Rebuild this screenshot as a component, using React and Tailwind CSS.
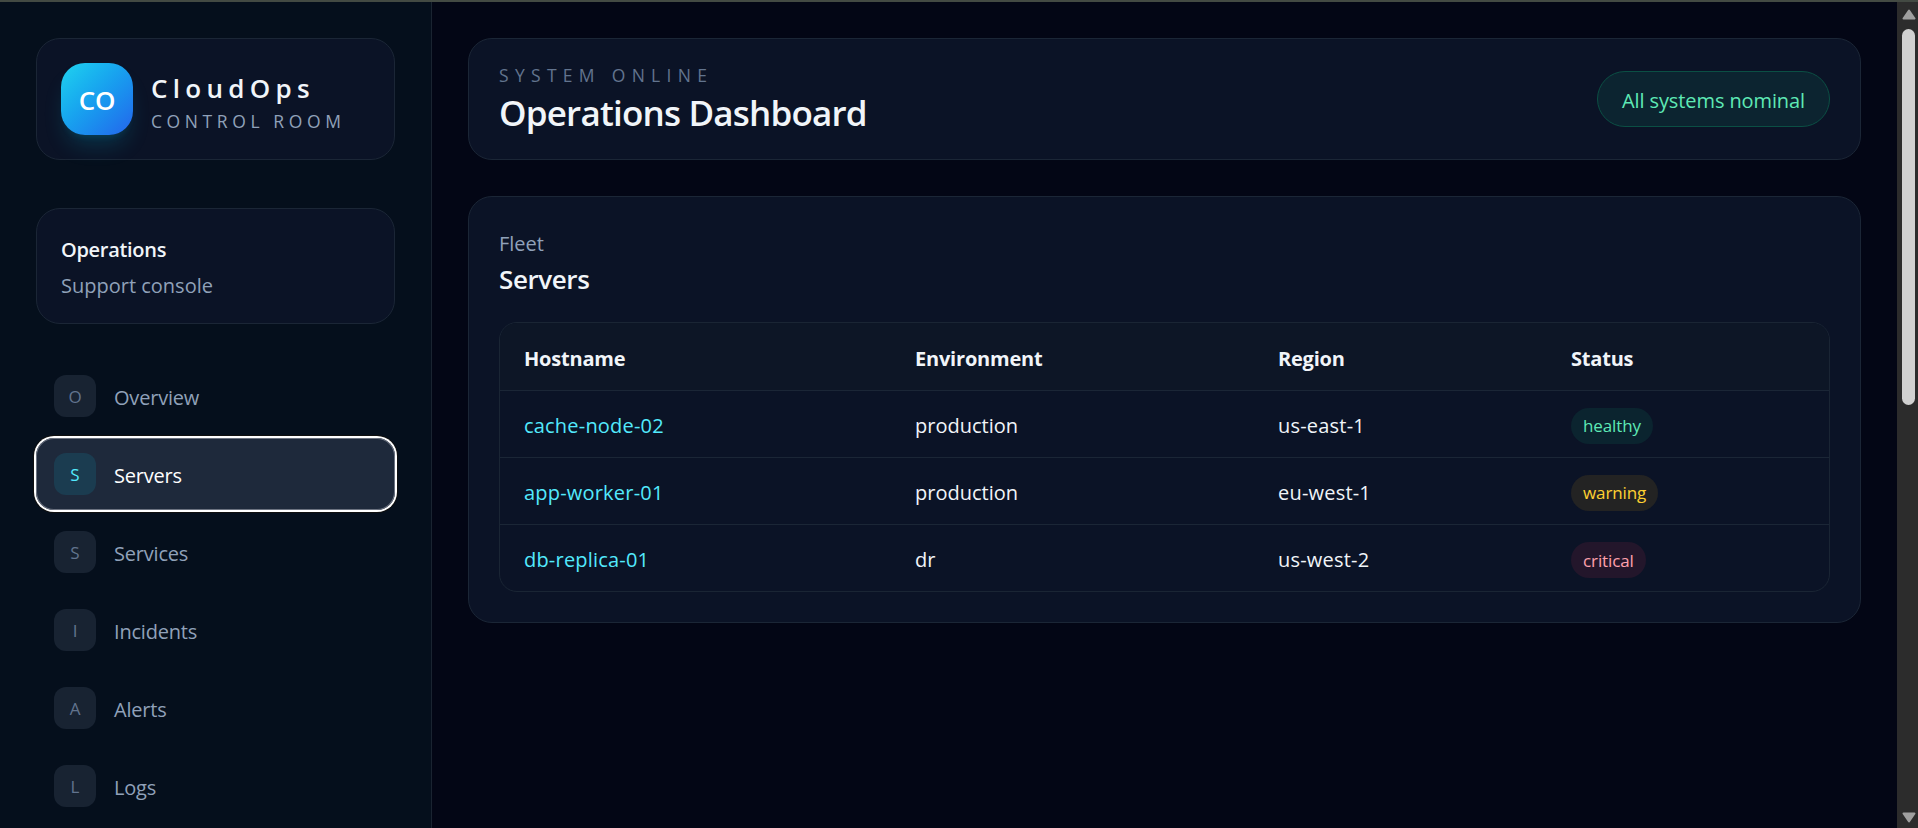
import clsx from 'clsx';

const navItems = ['Overview', 'Servers', 'Services', 'Incidents', 'Alerts', 'Logs'];

const servers = [
  { hostname: 'cache-node-02', environment: 'production', region: 'us-east-1', status: 'healthy' },
  { hostname: 'app-worker-01', environment: 'production', region: 'eu-west-1', status: 'warning' },
  { hostname: 'db-replica-01', environment: 'dr', region: 'us-west-2', status: 'critical' }
];

const statusStyles = {
  healthy: 'bg-[#0b242f] text-emerald-300',
  warning: 'bg-[#232323] text-amber-300',
  critical: 'bg-[#23162b] text-rose-300'
};

function Sidebar({ active }) {
  return (
    <aside className="w-[432px] shrink-0 border-r border-[#1a2431] bg-[#050f1c] px-9 pt-9">
      <div className="flex h-[122px] items-center gap-[18px] rounded-3xl border border-[#1b2636] bg-[#0b1326] px-6">
        <div className="flex size-[72px] shrink-0 items-center justify-center rounded-3xl bg-linear-to-br from-[#22d3ee] to-[#2563eb] pt-0.5 text-[26px] font-semibold tracking-[-0.3px] text-white shadow-[0_15px_22px_-5px_rgba(6,182,212,0.2),0_6px_9px_-6px_rgba(6,182,212,0.2)]">
          CO
        </div>
        <div className="pt-[7px]">
          <p className="text-[26px] leading-9 font-semibold tracking-[5.3px] text-slate-100">CloudOps</p>
          <p className="text-[17.5px] leading-[30px] tracking-[4.6px] text-slate-400">CONTROL ROOM</p>
        </div>
      </div>

      <div className="mt-12 flex h-[116px] flex-col justify-center rounded-3xl border border-[#1b2636] bg-[#0b1326] px-6 pt-[3px] text-[20px] leading-9">
        <p className="font-semibold tracking-[-0.3px] text-slate-100">Operations</p>
        <p className="text-slate-400">Support console</p>
      </div>

      <nav className="mt-9 flex flex-col gap-1.5">
        {navItems.map(item => (
          <a
            key={item}
            href="#"
            className={clsx(
              'flex h-[72px] items-center gap-[18px] rounded-[18px] px-[18px] text-[20px]',
              item === active
                ? 'bg-[#1e293b] text-white shadow-[0_0_0_2px_#ffffff,0_0_0_3px_#101010,inset_0_0_0_1px_#6b7280]'
                : 'text-slate-400'
            )}
          >
            <span
              className={clsx(
                'flex size-[42px] items-center justify-center rounded-xl pt-px text-[17px]',
                item === active ? 'bg-[#1b3c50] text-cyan-300' : 'bg-[#182332] text-slate-500'
              )}
            >
              {item[0]}
            </span>
            <span className="pt-[3px] tracking-[-0.2px]">{item}</span>
          </a>
        ))}
      </nav>
    </aside>
  );
}

function ServersTable() {
  return (
    <div className="mt-[25px] overflow-hidden rounded-[18px] border border-[#1a2534]">
      <table className="w-full table-fixed text-left text-[20px] text-slate-100">
        <colgroup>
          <col className="w-[391px]" />
          <col className="w-[363px]" />
          <col className="w-[293px]" />
          <col />
        </colgroup>
        <thead>
          <tr className="h-[67px] border-b border-[#1b2636] bg-[#0d1626] tracking-[-0.2px]">
            <th className="px-6 pt-[5px] font-bold">Hostname</th>
            <th className="px-6 pt-[5px] font-bold">Environment</th>
            <th className="px-6 pt-[5px] font-bold">Region</th>
            <th className="px-6 pt-[5px] font-bold">Status</th>
          </tr>
        </thead>
        <tbody>
          {servers.map(server => (
            <tr key={server.hostname} className="h-[67px] border-b border-[#1b2636] last:border-b-0">
              <td className="px-6 pt-1 tracking-[0.2px] text-cyan-300">{server.hostname}</td>
              <td className="px-6 pt-1">{server.environment}</td>
              <td className="px-6 pt-1 tracking-[0.2px]">{server.region}</td>
              <td className="px-6 pt-1">
                <span
                  className={clsx(
                    'flex h-9 w-fit items-center rounded-full px-3 pt-px text-[17px] tracking-[-0.1px]',
                    statusStyles[server.status]
                  )}
                >
                  {server.status}
                </span>
              </td>
            </tr>
          ))}
        </tbody>
      </table>
    </div>
  );
}

function Scrollbar() {
  return (
    <div className="flex w-[21px] shrink-0 flex-col items-center bg-[#2c2c2c] pt-1.5 pb-1 pl-0.5">
      <svg className="h-3 w-4" viewBox="0 0 16 12">
        <path d="M8 2.5 13.5 10.5H2.5Z" fill="#9f9f9f" stroke="#9f9f9f" strokeWidth="2" strokeLinejoin="round" />
      </svg>
      <div className="mt-[9px] h-[376px] w-[13px] rounded-full bg-[#d1d1d1]" />
      <svg className="mt-auto h-3 w-4" viewBox="0 0 16 12">
        <path d="M8 9.5 13.5 1.5H2.5Z" fill="#9f9f9f" stroke="#9f9f9f" strokeWidth="2" strokeLinejoin="round" />
      </svg>
    </div>
  );
}

function App() {
  return (
    <div className="flex h-screen overflow-hidden border-t-2 border-[#434a43] bg-[#030615] font-['Open_Sans','Noto_Sans',sans-serif]">
      <Sidebar active="Servers" />

      <main className="flex-1 p-9">
        <header className="flex h-[122px] items-center justify-between rounded-3xl border border-[#1b2636] bg-[#0b1326] px-[30px]">
          <div>
            <p className="text-[17.5px] leading-7 tracking-[6.3px] text-slate-500">SYSTEM ONLINE</p>
            <h1 className="text-[35px] leading-[48px] font-semibold tracking-[-0.8px] text-slate-100">
              Operations Dashboard
            </h1>
          </div>
          <div className="flex h-14 items-center rounded-full border border-[#0b4f44] bg-[#0c2430] px-6 pt-[3px] text-[20px] tracking-[-0.1px] text-emerald-300">
            All systems nominal
          </div>
        </header>

        <section className="mt-9 rounded-3xl border border-[#1b2636] bg-[#0b1326] px-[30px] pt-[30px] pb-[30px]">
          <p className="text-[20px] leading-[34px] text-slate-400">Fleet</p>
          <h2 className="text-[26px] leading-9 font-semibold tracking-[-0.4px] text-slate-100">Servers</h2>
          <ServersTable />
        </section>
      </main>

      <Scrollbar />
    </div>
  );
}

export default App;
